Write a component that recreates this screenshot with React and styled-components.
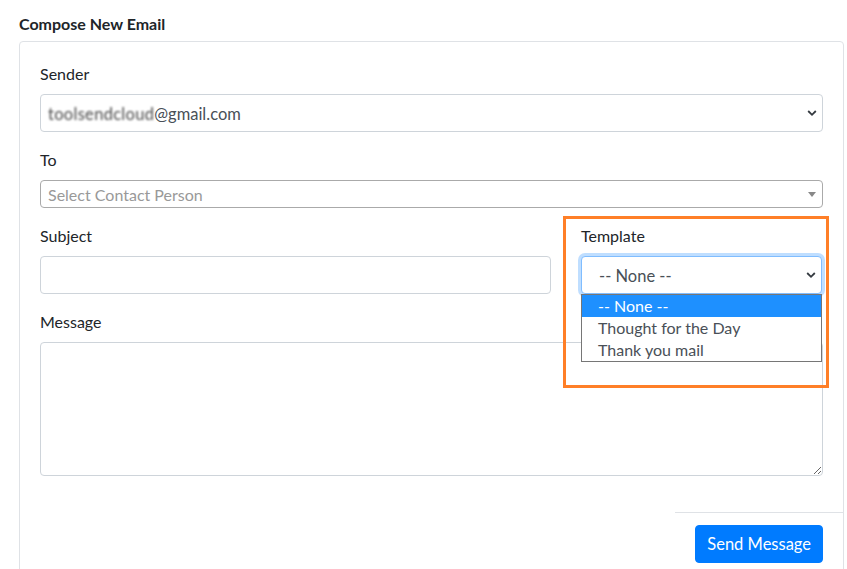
import React from "react";
import styled, { createGlobalStyle } from "styled-components";

const Global = createGlobalStyle`
  html, body { margin: 0; padding: 0; background: #fff; }
  body { font-family: "Lato", "Liberation Sans", sans-serif; color: #212529; }
  * { box-sizing: border-box; }
`;

const Page = styled.div`
  padding: 14px 0 0 19px;
  width: 847px;
  height: 569px;
  overflow: hidden;
  position: relative;
`;

const Title = styled.h1`
  margin: 0 0 7px 0;
  font-size: 16px;
  line-height: 20px;
  font-weight: 700;
  color: #212529;
`;

const Card = styled.div`
  width: 825px;
  border: 1px solid #dfe2e6;
  border-radius: 4px;
  background: #fff;
`;

const Body = styled.div`
  padding: 20px 20px 20px 20px;
`;

const Group = styled.div`
  margin-bottom: 16px;
  position: relative;
`;

const Row = styled.div`
  display: grid;
  grid-template-columns: 511px 241px;
  column-gap: 30px;
`;

const Label = styled.label`
  display: block;
  font-size: 16px;
  line-height: 24px;
  margin-bottom: 8px;
  color: #212529;
`;

const SelectWrap = styled.div`
  position: relative;
`;

const Select = styled.div`
  height: 38px;
  border: 1px solid ${(p) => (p.$focus ? "#80bdff" : "#ced4da")};
  border-radius: 4px;
  padding: ${(p) => (p.$inset ? "2px 28px 0 17px" : "1px 28px 0 7px")};
  display: flex;
  align-items: center;
  font-size: 16.5px;
  color: #495057;
  box-shadow: ${(p) => (p.$focus ? "0 0 0 3px rgba(0,123,255,.25)" : "none")};
  background: #fff;
  white-space: nowrap;
`;

const Blurred = styled.span`
  color: #4a4a4a;
  filter: blur(1.3px);
  letter-spacing: 0.3px;
`;

const Chevron = styled.svg`
  position: absolute;
  right: 6px;
  top: 50%;
  margin-top: -4px;
`;

const Select2 = styled.div`
  height: 28px;
  border: 1px solid #aaa;
  border-radius: 4px;
  padding: 1px 24px 0 7px;
  display: flex;
  align-items: center;
  font-size: 16px;
  color: #999;
  background: #fff;
  position: relative;
`;

const Caret = styled.span`
  position: absolute;
  right: 6px;
  top: 11px;
  width: 0;
  height: 0;
  border-left: 4px solid transparent;
  border-right: 4px solid transparent;
  border-top: 5px solid #888;
`;

const Input = styled.input`
  display: block;
  width: 100%;
  height: 38px;
  border: 1px solid #ced4da;
  border-radius: 4px;
  font-size: 16px;
  padding: 6px 12px;
  outline: none;
`;

const TextArea = styled.textarea`
  display: block;
  width: 100%;
  height: 134px;
  border: 1px solid #ced4da;
  border-radius: 4px;
  font-size: 16px;
  padding: 6px 12px;
  outline: none;
  resize: vertical;
`;

const Options = styled.ul`
  position: absolute;
  left: 0;
  right: 0;
  top: 100%;
  margin: 0;
  padding: 0;
  list-style: none;
  border: 1px solid #767676;
  background: #fff;
  z-index: 5;
`;

const Option = styled.li`
  height: 22px;
  line-height: 22px;
  padding-left: 16px;
  font-size: 16px;
  color: ${(p) => (p.$active ? "#fff" : "#495057")};
  background: ${(p) => (p.$active ? "#1e90ff" : "#fff")};
`;

const Footer = styled.div`
  margin-left: 655px;
  border-top: 1px solid #dfe2e6;
  padding: 12px 20px 12px 0;
  display: flex;
  justify-content: flex-end;
`;

const Button = styled.button`
  background: #007bff;
  border: 1px solid #007bff;
  color: #fff;
  border-radius: 4px;
  font-family: inherit;
  font-size: 16.5px;
  line-height: 24px;
  padding: 6px 11px;
  white-space: nowrap;
`;

const Highlight = styled.div`
  position: absolute;
  left: 563px;
  top: 216px;
  width: 266px;
  height: 172px;
  border: 3px solid #ff7f27;
  pointer-events: none;
`;

const ChevronIcon = () => (
  <Chevron width="10" height="8" viewBox="0 0 10 8">
    <path d="M1.2 2 L5 5.8 L8.8 2" fill="none" stroke="#343a40" strokeWidth="1.8" />
  </Chevron>
);

export default function App() {
  return (
    <>
      <Global />
      <Page>
        <Title>Compose New Email</Title>
        <Card>
          <Body>
            <Group>
              <Label>Sender</Label>
              <SelectWrap>
                <Select>
                  <Blurred>toolsendcloud</Blurred>@gmail.com
                </Select>
                <ChevronIcon />
              </SelectWrap>
            </Group>
            <Group>
              <Label>To</Label>
              <Select2>
                Select Contact Person
                <Caret />
              </Select2>
            </Group>
            <Row>
              <Group>
                <Label>Subject</Label>
                <Input type="text" />
              </Group>
              <Group>
                <Label>Template</Label>
                <SelectWrap>
                  <Select $focus $inset>-- None --</Select>
                  <ChevronIcon />
                  <Options>
                    <Option $active>-- None --</Option>
                    <Option>Thought for the Day</Option>
                    <Option>Thank you mail</Option>
                  </Options>
                </SelectWrap>
              </Group>
            </Row>
            <Group>
              <Label>Message</Label>
              <TextArea />
            </Group>
          </Body>
          <Footer>
            <Button>Send Message</Button>
          </Footer>
        </Card>
        <Highlight />
      </Page>
    </>
  );
}
